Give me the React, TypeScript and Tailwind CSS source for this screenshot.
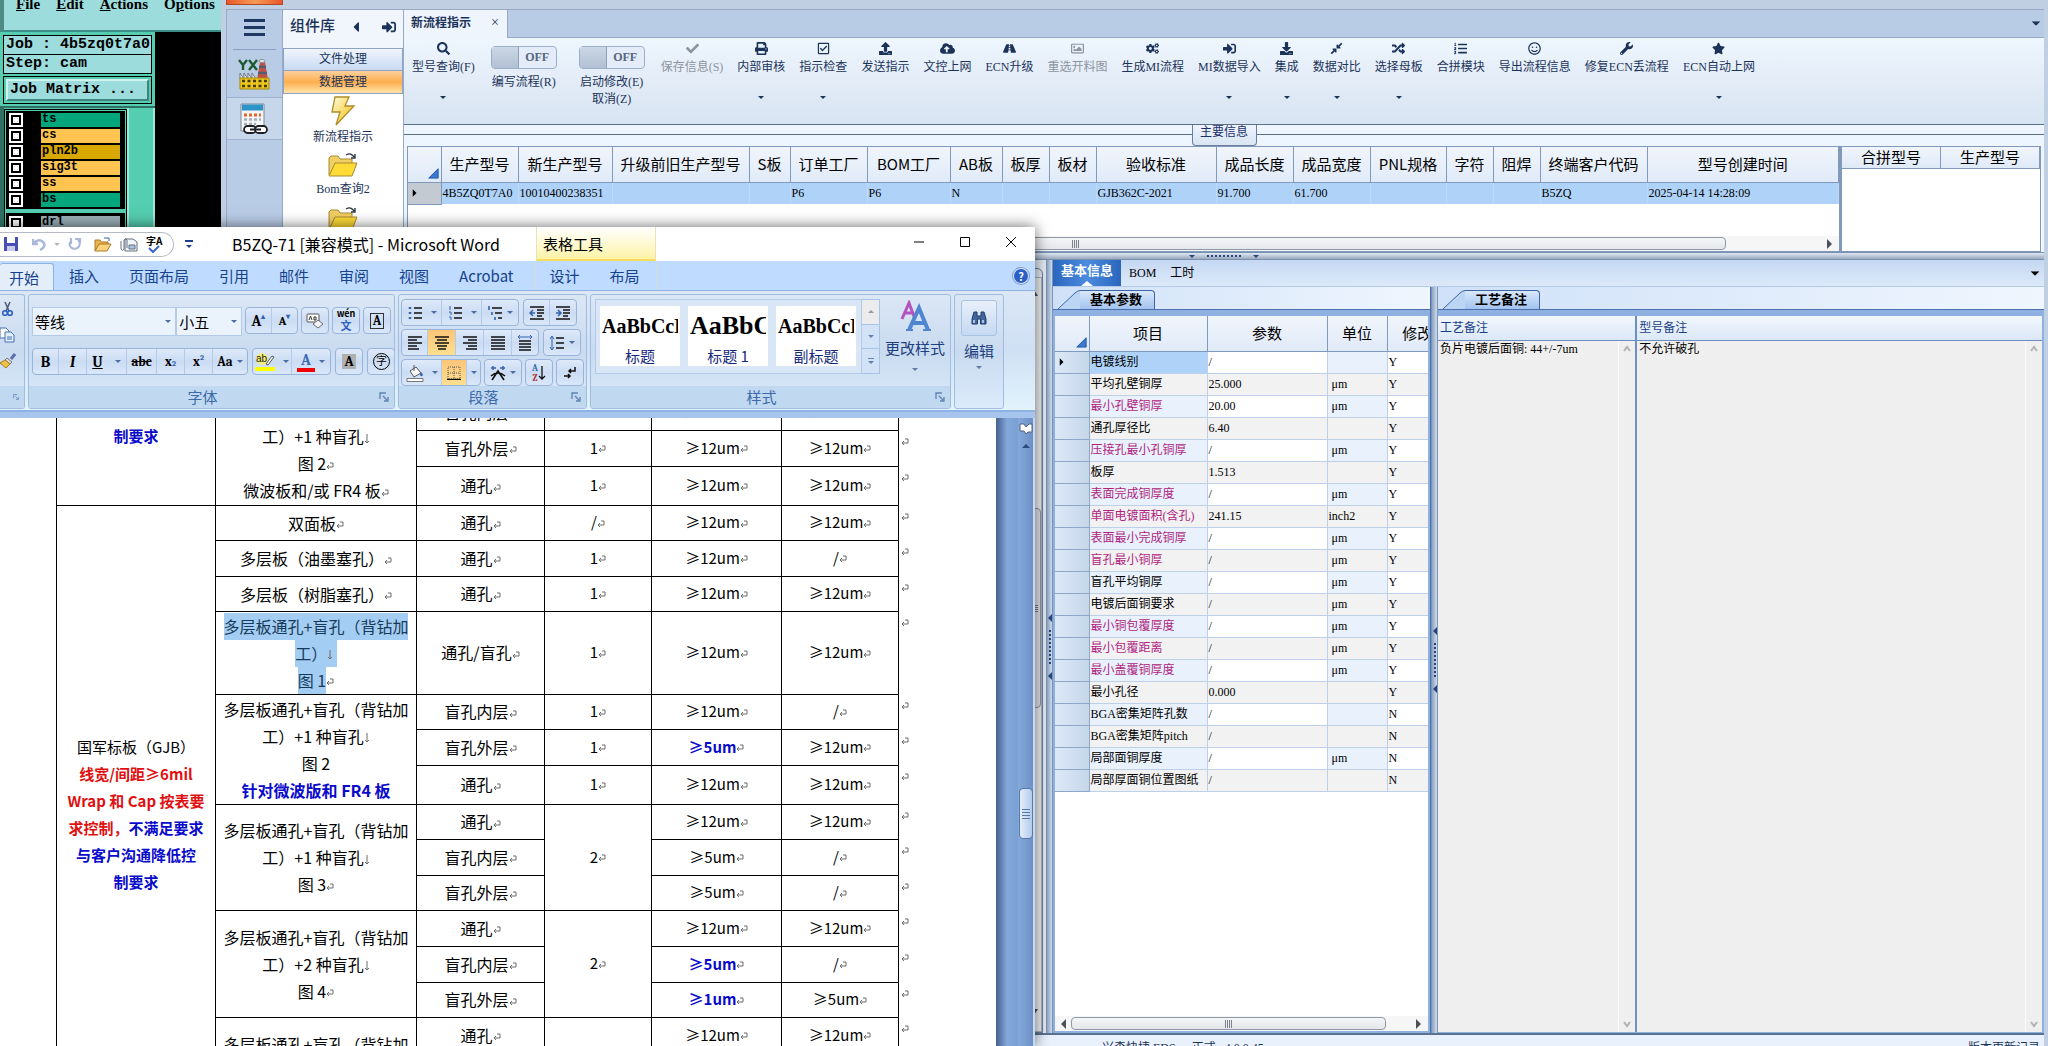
import React from 'react';
import {
  FaSearch, FaCheck, FaPrint, FaRegCheckSquare, FaUpload, FaCloudUploadAlt, FaRoad, FaRegImage, FaCogs,
  FaSignInAlt, FaDownload, FaCompressAlt, FaRandom, FaListOl, FaRegSmile, FaWrench, FaStar, FaCaretLeft,
} from 'react-icons/fa';

/* ---------- shared bits ---------- */

const Down = ({ className = '' }: { className?: string }) => (
  <svg viewBox="0 0 8 4" className={`w-[6px] h-[3px] shrink-0 ${className}`} aria-hidden="true">
    <path d="M0 0h8L4 4z" fill="currentColor" />
  </svg>
);

const HScroll = ({ thumb }: { thumb: string }) => (
  <div className="flex h-[15px] shrink-0 items-center bg-[#f6f6f7] text-[#4c5058]">
    <svg viewBox="0 0 16 12" className="w-4 h-3"><path d="M11 1v10L6 6z" fill="currentColor" /></svg>
    <div className={`flex h-[13px] items-center justify-center gap-px rounded-sm border border-[#8f98a5] bg-gradient-to-b from-[#f4f5f7] to-[#e4e7eb] ${thumb}`}>
      {[0, 1, 2, 3].map((i) => <span key={i} className="h-2 w-px bg-[#7c828c]" />)}
    </div>
    <span className="flex-1" />
    <svg viewBox="0 0 16 12" className="w-5 h-3"><path d="M6 1v10l5-5z" fill="currentColor" /></svg>
  </div>
);

/* ---------- CAM window ---------- */

const layers = [
  { name: 'ts', bg: 'bg-[#04a67c]' },
  { name: 'cs', bg: 'bg-[#fdc44f]' },
  { name: 'pln2b', bg: 'bg-[#d8a800]' },
  { name: 'sig3t', bg: 'bg-[#fdc44f]' },
  { name: 'ss', bg: 'bg-[#fdc44f]' },
  { name: 'bs', bg: 'bg-[#04a67c]' },
];

const LayerRow = ({ name, bg }: { name: string; bg: string }) => (
  <label className="flex h-4 items-center gap-[18px] pl-[3px] pr-[5px]">
    <input type="checkbox" className="m-0 h-[14px] w-[14px] shrink-0 appearance-none border-2 border-white bg-white shadow-[inset_0_0_0_2px_#000]" />
    <span className={`h-[14px] flex-1 pl-px text-xs font-bold leading-[13px] text-black ${bg}`}>{name}</span>
  </label>
);

const CamWindow = () => (
  <div className="absolute left-0 top-0 h-[240px] w-[221px] overflow-hidden bg-black font-['Liberation_Mono',monospace] text-black">
    <nav className="flex h-8 items-start gap-4 border-b-2 border-l-4 border-b-[#3c8f86] border-l-[#4e8b84] bg-[#9cdcdc] pl-3 font-['Liberation_Serif',serif] text-[15px] font-bold leading-[8px]">
      <a href="#file"><u>F</u>ile</a>
      <a href="#edit"><u>E</u>dit</a>
      <a href="#actions"><u>A</u>ctions</a>
      <a href="#options">O<u>p</u>tions</a>
    </nav>
    <div className="w-[155px] bg-[#55cdb0]">
      <div className="border-2 border-[#55cdb0] px-px pt-px">
        <div className="border border-black bg-[#9cdcdc] text-[15px] font-bold">
          <div className="h-[19px] whitespace-nowrap border-b border-black pl-[2px] leading-[18px]">Job : 4b5zq0t7a0</div>
          <div className="h-[18px] pl-[2px] leading-[18px]">Step: cam</div>
        </div>
        <div className="mt-[2px] border border-black p-[2px]">
          <button className="h-[22px] w-full border-2 border-b-[#3f857d] border-l-[#d0f3ee] border-r-[#3f857d] border-t-[#d0f3ee] bg-[#9cdcdc] pl-[2px] text-left text-[15px] font-bold leading-[18px]">Job Matrix ...</button>
        </div>
      </div>
      <div className="flex border-t-2 border-[#2f6f64]">
        <div className="w-[127px] border-l-4 border-[#2f6f64]">
          <div className="mt-px border border-black bg-[#55cdb0] p-px">
            <div className="bg-black pb-px pt-px">
              {layers.map((l) => <LayerRow key={l.name} {...l} />)}
            </div>
            <div className="mt-1 bg-black pt-[2px]"><LayerRow name="drl" bg="bg-[#9aaeb6]" /></div>
          </div>
        </div>
        <div className="flex-1 border-l-2 border-r-2 border-[#9cebd6]" />
      </div>
    </div>
  </div>
);

/* ---------- MI application: left side ---------- */

const FactoryIcon = () => (
  <svg viewBox="0 0 32 32" className="h-8 w-8" aria-hidden="true">
    <path d="M1 2l4 5v5M9 2L5 7M11 2l8 10M19 2l-8 10" stroke="#1d5a33" strokeWidth="2.4" fill="none" />
    <path d="M22 4h5l3 18h-11z" fill="#c2504a" />
    <path d="M21 9h7M20 15h9" stroke="#545d6c" strokeWidth="2.5" />
    <ellipse cx="24" cy="3" rx="3" ry="1.6" fill="#dfe4ea" stroke="#8c95a2" />
    <path d="M2 21v-6l4 6v-6l4 6v-6l4 6v-6l4 6" fill="#fff" stroke="#6c7582" />
    <path d="M2 20h29v11H2z" fill="#eec71c" stroke="#a5870b" />
    <path d="M4 23h25M4 28h25" stroke="#463c12" strokeWidth="2.4" strokeDasharray="3 2.5" />
  </svg>
);

const CalendarIcon = () => (
  <svg viewBox="0 0 30 32" className="h-8 w-[30px]" aria-hidden="true">
    <path d="M2 1h23v27H2z" fill="#f3f5f8" stroke="#7e8794" />
    <path d="M3 1.500h21v6H3z" fill="#2c94c8" />
    <path d="M5 12h17" stroke="#e0662c" strokeWidth="3" strokeDasharray="3 2" />
    <path d="M5 16.500h17M5 21h12" stroke="#a8aeb8" strokeWidth="2.500" strokeDasharray="3 2" />
    <rect x="5" y="23" width="12" height="7" rx="3.500" fill="#fff" stroke="#1b1f25" strokeWidth="1.800" />
    <rect x="16" y="23" width="12" height="7" rx="3.500" fill="#fff" stroke="#1b1f25" strokeWidth="1.800" />
    <path d="M11 26.500h11" stroke="#1b1f25" strokeWidth="2" />
  </svg>
);

const BoltIcon = () => (
  <svg viewBox="0 0 26 30" className="h-[30px] w-[26px]" aria-hidden="true">
    <defs><linearGradient id="bolt" x1="0" y1="0" x2="1" y2="1"><stop offset="0" stopColor="#fffbe0" /><stop offset="1" stopColor="#f3bd00" /></linearGradient></defs>
    <path d="M5 1h14l-4 9h9L6 29l4-13H2z" fill="url(#bolt)" stroke="#b08d25" strokeWidth="1.300" />
  </svg>
);

const FolderIcon = () => (
  <svg viewBox="0 0 32 26" className="h-[26px] w-8" aria-hidden="true">
    <path d="M2 23V6l2-2h7l2 3h12v4" fill="#f0cf63" stroke="#a88a35" />
    <path d="M2 24L8 11h22l-5 13z" fill="#ffdb35" stroke="#a88a35" />
    <path d="M19 3q5-3 8 2M28 2v4h-4" fill="none" stroke="#2c3742" strokeWidth="1.400" />
  </svg>
);

const SideRail = () => (
  <div className="flex w-[56px] shrink-0 flex-col border-l border-t border-[#97a9c4] bg-[#b9cce6]">
    <button className="mx-[6px] flex h-10 flex-col items-center justify-center gap-1 border-b border-[#8b9fbe] pb-1" aria-label="菜单">
      <span className="h-[3px] w-[21px] bg-[#1f3763]" />
      <span className="h-[3px] w-[21px] bg-[#1f3763]" />
      <span className="h-[3px] w-[21px] bg-[#1f3763]" />
    </button>
    <button className="flex h-[47px] items-center justify-center pr-[2px]" aria-label="工厂"><FactoryIcon /></button>
    <button className="flex h-[43px] items-center justify-center border-y border-[#9fb3d0] bg-[#c6d6eb] pr-[2px]" aria-label="日历"><CalendarIcon /></button>
  </div>
);

const ComponentLibrary = () => (
  <aside className="flex w-[122px] shrink-0 flex-col border-x border-t border-[#97a9c4] bg-white text-xs text-[#1c3359]">
    <div className="flex h-[38px] shrink-0 items-center bg-[#f1f6fc] px-[7px] pb-1">
      <h2 className="flex-1 text-[15px] font-medium">组件库</h2>
      <FaCaretLeft className="mr-[18px] h-4 w-4" />
      <FaSignInAlt className="h-[14px] w-[14px]" />
    </div>
    <button className="h-[23px] shrink-0 border border-[#8fa4c5] bg-gradient-to-b from-[#f0f5fd] to-[#c8daf2] leading-[21px]">文件处理</button>
    <button className="h-[23px] shrink-0 border-x border-b border-[#8fa4c5] bg-gradient-to-b from-[#fdd09a] via-[#fcae4b] to-[#ffe3a8] leading-[21px]">数据管理</button>
    <ul className="flex flex-col items-center overflow-hidden">
      <li className="flex h-[58px] flex-col items-center gap-[3px] pt-[2px]"><BoltIcon /><span className="leading-4">新流程指示</span></li>
      <li className="flex h-[54px] flex-col items-center gap-[3px]"><FolderIcon /><span className="leading-4">Bom查询2</span></li>
      <li><FolderIcon /></li>
    </ul>
  </aside>
);

/* ---------- MI application: toolbar ---------- */

type Tool = { icon: React.ReactNode; text: string; menu?: boolean; off?: boolean };

const I = 'h-[13px] w-[13px]';
const tools: Tool[] = [
  { icon: <FaCheck className={I} />, text: '保存信息(S)', off: true },
  { icon: <FaPrint className={I} />, text: '内部审核', menu: true },
  { icon: <FaRegCheckSquare className={I} />, text: '指示检查', menu: true },
  { icon: <FaUpload className={I} />, text: '发送指示' },
  { icon: <FaCloudUploadAlt className="h-[15px] w-[15px]" />, text: '文控上网' },
  { icon: <FaRoad className={I} />, text: 'ECN升级' },
  { icon: <FaRegImage className={I} />, text: '重选开料图', off: true },
  { icon: <FaCogs className={I} />, text: '生成MI流程' },
  { icon: <FaSignInAlt className={I} />, text: 'MI数据导入', menu: true },
  { icon: <FaDownload className={I} />, text: '集成', menu: true },
  { icon: <FaCompressAlt className={I} />, text: '数据对比', menu: true },
  { icon: <FaRandom className={I} />, text: '选择母板', menu: true },
  { icon: <FaListOl className={I} />, text: '合拼模块' },
  { icon: <FaRegSmile className={I} />, text: '导出流程信息' },
  { icon: <FaWrench className={I} />, text: '修复ECN丢流程' },
  { icon: <FaStar className={I} />, text: 'ECN自动上网', menu: true },
];

const ToolButton = ({ icon, text, menu, off }: Tool) => (
  <button disabled={off} className={`flex shrink-0 flex-col items-center ${off ? 'text-[#8d949e]' : 'text-[#1c3359]'}`}>
    <span className="flex h-5 items-center">{icon}</span>
    <span className="whitespace-nowrap leading-[18px]">{text}</span>
    {menu && <Down className="mt-5" />}
  </button>
);

const Toggle = ({ text, sub }: { text: string; sub?: string }) => (
  <div className="flex shrink-0 flex-col items-center pt-2">
    <button role="switch" aria-checked="false" aria-label={text} className="flex h-[23px] w-[66px] rounded-sm border border-[#9db0cb] bg-[#e3ecf8]">
      <span className="h-full w-[27px] border-r border-[#8fa1bb] bg-gradient-to-b from-[#ccd8e6] to-[#b2c0d2]" />
      <span className="flex-1 text-center font-bold leading-[20px] text-[#56657e]">OFF</span>
    </button>
    <span className="mt-1 whitespace-nowrap leading-[18px]">{text}</span>
    {sub && <span className="leading-[16px]">{sub}</span>}
  </div>
);

const Toolbar = () => (
  <div className="flex h-[86px] shrink-0 items-start gap-4 overflow-hidden bg-gradient-to-b from-[#eef6fe] via-[#e3ecf7] to-[#d7e4f2] pl-2 text-xs text-[#1c3359]">
    <ToolButton icon={<FaSearch className={I} />} text="型号查询(F)" menu />
    <div className="flex gap-[22px]">
      <Toggle text="编写流程(R)" />
      <Toggle text="启动修改(E)" sub="取消(Z)" />
    </div>
    <div className="flex items-start gap-[14px]">
      {tools.map((t) => <ToolButton key={t.text} {...t} />)}
    </div>
  </div>
);

/* ---------- MI application: main grid ---------- */

const mainCols: { name: string; w: string; value?: string }[] = [
  { name: '生产型号', w: 'w-[77px]', value: '4B5ZQ0T7A0' },
  { name: '新生产型号', w: 'w-[94px]', value: '10010400238351' },
  { name: '升级前旧生产型号', w: 'w-[137px]' },
  { name: 'S板', w: 'w-[41px]' },
  { name: '订单工厂', w: 'w-[77px]', value: 'P6' },
  { name: 'BOM工厂', w: 'w-[83px]', value: 'P6' },
  { name: 'AB板', w: 'w-[52px]', value: 'N' },
  { name: '板厚', w: 'w-[47px]' },
  { name: '板材', w: 'w-[47px]' },
  { name: '验收标准', w: 'w-[120px]', value: 'GJB362C-2021' },
  { name: '成品长度', w: 'w-[77px]', value: '91.700' },
  { name: '成品宽度', w: 'w-[77px]', value: '61.700' },
  { name: 'PNL规格', w: 'w-[76px]' },
  { name: '字符', w: 'w-[47px]' },
  { name: '阻焊', w: 'w-[47px]' },
  { name: '终端客户代码', w: 'w-[107px]', value: 'B5ZQ' },
  { name: '型号创建时间', w: '', value: '2025-04-14 14:28:09' },
];

const HEAD = "border-b border-r border-[#8099bd] bg-gradient-to-b from-[#f1f5fb] to-[#dfeaf8] p-0 text-[15px] font-normal text-black font-['Noto_Sans_CJK_SC',sans-serif]";

const Corner = () => (
  <svg viewBox="0 0 34 34" className="ml-auto h-8 w-8" aria-hidden="true"><path d="M31 22v10H21z" fill="#3a78cf" stroke="#2457a6" /></svg>
);

const RowArrow = () => (
  <svg viewBox="0 0 8 10" className="ml-1 h-2 w-[6px]" aria-hidden="true"><path d="M1 0v10l5-5z" fill="#000" /></svg>
);

const MainGrid = () => (
  <section className="flex flex-col border-t border-[#5d6e86] bg-[#edf5fe]">
    <div className="flex h-[21px] shrink-0 items-center">
      <span className="-mt-[3px] h-px flex-1 bg-[#5d6e86]" />
      <h3 className="h-[21px] w-[65px] rounded-b-sm border border-t-0 border-[#6b7f9c] bg-gradient-to-b from-[#eef4fc] to-[#d9e5f4] text-center text-xs leading-[15px] text-[#1b2f6b]">主要信息</h3>
      <span className="-mt-[3px] h-px flex-1 bg-[#5d6e86]" />
    </div>
    <div className="flex h-[106px] pl-[3px] pr-[3px]">
      <div className="flex min-w-0 flex-1 flex-col border border-[#8099bd] bg-white">
        <table className="w-full table-fixed border-collapse">
          <thead>
            <tr className="h-[35px]">
              <th scope="col" className={`${HEAD} w-[33px]`}><Corner /></th>
              {mainCols.map((c) => <th key={c.name} scope="col" className={`${HEAD} ${c.w} whitespace-nowrap leading-8`}>{c.name}</th>)}
            </tr>
          </thead>
          <tbody>
            <tr className="h-[22px] bg-[#afd3f8] text-xs">
              <td className="border-b border-r border-[#8099bd] bg-[#c4cad2] p-0"><RowArrow /></td>
              {mainCols.map((c) => <td key={c.name} className="border-r border-[#bcdaf9] p-0 pl-px leading-4">{c.value}</td>)}
            </tr>
          </tbody>
        </table>
        <div className="flex-1" />
        <HScroll thumb="w-[91%]" />
      </div>
      <div className="w-[201px] shrink-0 border border-l-2 border-[#8099bd] bg-white">
        <table className="w-full table-fixed border-collapse">
          <thead><tr className="h-[21px]">
            <th scope="col" className={`${HEAD} leading-5`}>合拼型号</th>
            <th scope="col" className={`${HEAD} leading-5`}>生产型号</th>
          </tr></thead>
        </table>
      </div>
    </div>
  </section>
);

/* ---------- MI application: lower panes ---------- */

type Param = [name: string, value: string, unit: string, flag: string, key?: boolean];
const params: Param[] = [
  ['电镀线别', '/', '', 'Y'],
  ['平均孔壁铜厚', '25.000', 'μm', 'Y'],
  ['最小孔壁铜厚', '20.00', 'μm', 'Y', true],
  ['通孔厚径比', '6.40', '', 'Y'],
  ['压接孔最小孔铜厚', '/', 'μm', 'Y', true],
  ['板厚', '1.513', '', 'Y'],
  ['表面完成铜厚度', '/', 'μm', 'Y', true],
  ['单面电镀面积(含孔)', '241.15', 'inch2', 'Y', true],
  ['表面最小完成铜厚', '/', 'μm', 'Y', true],
  ['盲孔最小铜厚', '/', 'μm', 'Y', true],
  ['盲孔平均铜厚', '/', 'μm', 'Y'],
  ['电镀后面铜要求', '/', 'μm', 'Y'],
  ['最小铜包覆厚度', '/', 'μm', 'Y', true],
  ['最小包覆距离', '/', 'μm', 'Y', true],
  ['最小盖覆铜厚度', '/', 'μm', 'Y', true],
  ['最小孔径', '0.000', '', 'Y'],
  ['BGA密集矩阵孔数', '/', '', 'N'],
  ['BGA密集矩阵pitch', '/', '', 'N'],
  ['局部面铜厚度', '/', 'μm', 'N'],
  ['局部厚面铜位置图纸', '/', '', 'N'],
];

const PaneTab = ({ text }: { text: string }) => (
  <div className="flex h-[23px] shrink-0 items-end border-b border-[#4a71ad] bg-gradient-to-r from-[#cfe1f8] to-[#f0f6fe] pl-[5px]">
    <svg viewBox="0 0 22 19" className="h-[19px] w-[22px]" aria-hidden="true">
      <path d="M0 19L17 3q3-3 5-2.500V19z" fill="#bcd5f5" /><path d="M0 19L17 3q3-2.500 5-2.500" fill="none" stroke="#3e66a5" />
    </svg>
    <h3 className="h-[19px] rounded-tr border-r border-t border-[#3e66a5] bg-gradient-to-b from-[#d9e8fb] to-[#a3c3ee] pl-[10px] pr-3 text-[13px] font-bold leading-[18px] text-black">{text}</h3>
  </div>
);

const VSplit = () => (
  <div className="flex w-[7px] shrink-0 flex-col items-center justify-center gap-2 border-x border-[#7a93b8] bg-gradient-to-r from-[#8fa3bd] to-[#cfdcec] text-[#27457c]">
    <svg viewBox="0 0 4 8" className="h-2 w-1"><path d="M4 0v8L0 4z" fill="currentColor" /></svg>
    <span className="h-[34px] border-l-2 border-dotted border-current" />
    <svg viewBox="0 0 4 8" className="h-2 w-1"><path d="M4 0v8L0 4z" fill="currentColor" /></svg>
  </div>
);

const ParamPane = () => (
  <section className="flex w-[378px] shrink-0 flex-col border-r border-[#4a71ad]">
    <PaneTab text="基本参数" />
    <div className="flex min-h-0 flex-1 flex-col border-2 border-t-[6px] border-[#8fb1e2] bg-white">
      <div className="min-h-0 flex-1 overflow-hidden">
        <table className="w-[393px] table-fixed border-collapse text-xs">
          <thead>
            <tr className="h-[35px]">
              <th scope="col" className={`${HEAD} w-[34px]`}><Corner /></th>
              <th scope="col" className={`${HEAD} w-[118px]`}>项目</th>
              <th scope="col" className={`${HEAD} w-[120px]`}>参数</th>
              <th scope="col" className={`${HEAD} w-[60px]`}>单位</th>
              <th scope="col" className={HEAD}>修改</th>
            </tr>
          </thead>
          <tbody>
            {params.map(([name, value, unit, flag, key], i) => {
              const tint = i % 2 ? 'bg-[#f2f2f2]' : 'bg-[#e8f1fc]';
              const plain = i % 2 ? 'bg-[#f2f2f2]' : 'bg-white';
              return (
                <tr key={name} className="h-[22px]">
                  <td className="border-b border-r border-[#8fa5c6] bg-gradient-to-r from-[#dce9f7] to-[#c5d6ea] p-0">{i === 0 && <RowArrow />}</td>
                  <td className={`whitespace-nowrap border-b border-r border-[#bdd0ea] p-0 pl-px leading-4 ${key ? 'text-[#b01f82]' : 'text-black'} ${i === 0 ? 'bg-[#afd3f8]' : tint}`}>{name}</td>
                  <td className={`border-b border-r border-[#bdd0ea] p-0 pl-px leading-4 ${plain}`}>{value}</td>
                  <td className={`border-b border-r border-[#bdd0ea] p-0 leading-4 ${unit === 'inch2' ? 'pl-px' : 'pl-1'} ${tint}`}>{unit}</td>
                  <td className={`border-b border-[#bdd0ea] p-0 pl-px leading-4 ${plain}`}>{flag}</td>
                </tr>
              );
            })}
          </tbody>
        </table>
      </div>
      <HScroll thumb="w-[315px]" />
    </div>
  </section>
);

const Chevron = ({ up }: { up?: boolean }) => (
  <svg viewBox="0 0 8 8" className="h-2 w-2"><path d={up ? 'M1 6l3-4 3 4' : 'M1 2l3 4 3-4'} fill="none" stroke="#b3b3b3" strokeWidth="2" /></svg>
);

const Remark = ({ id, title, text, className }: { id: string; title: string; text: string; className: string }) => (
  <div className={`flex flex-col ${className}`}>
    <label htmlFor={id} className="block h-[25px] shrink-0 border-b border-[#6d8fc0] bg-gradient-to-b from-[#f2f7fd] to-[#dbe8f7] pl-[2px] leading-6 text-[#1b3f86]">{title}</label>
    <div className="flex min-h-0 flex-1 bg-[#efefef]">
      <textarea id={id} defaultValue={text} className="min-w-0 flex-1 resize-none bg-[#efefef] pl-[2px] leading-4 text-black outline-none" />
      <div className="flex w-[17px] flex-col items-center justify-between border-l border-[#fafafa] py-1"><Chevron up /><Chevron /></div>
    </div>
  </div>
);

const MiApp = () => (
  <div className="absolute inset-0 flex flex-col bg-[#c0cfe2] pl-[226px] pr-1">
    <div className="h-[9px] shrink-0 bg-[#c0cfe2]"><div className="h-[5px] w-[57px] border-x border-b border-[#b34a26] bg-gradient-to-r from-[#e8552a] via-[#f59a55] to-[#e8552a]" /></div>
    <div className="flex min-h-0 flex-1">
      <SideRail />
      <ComponentLibrary />
      <main className="flex min-w-0 flex-1 flex-col">
        <div className="flex h-[29px] shrink-0 items-stretch border-b border-t border-[#97a9c4] bg-[#b9cce6] text-[#1c3359]">
          <div className="-mb-px flex w-[104px] items-center justify-between border-r border-[#97a9c4] bg-[#eef5fd] pb-[2px] pl-[7px] pr-2">
            <span className="text-xs font-bold">新流程指示</span>
            <button aria-label="关闭" className="text-sm leading-none">×</button>
          </div>
          <span className="flex-1" />
          <span className="flex items-center pr-[5px]"><Down className="scale-150" /></span>
        </div>
        <Toolbar />
        <MainGrid />
        <div className="flex h-2 shrink-0 items-center justify-center gap-3 border-y border-[#7a8fae] bg-gradient-to-b from-[#dfe9f5] to-[#9aa9bd] text-[#27457c]">
          <Down /><span className="w-[34px] border-t-2 border-dotted border-current" /><Down />
        </div>
        <div className="flex min-h-0 flex-1">
          {/* order pane, mostly below the document window */}
          <div className="flex w-[642px] shrink-0 flex-col bg-[#e3ebf5] pr-[3px] pt-2">
            <div className="flex min-h-0 flex-1 justify-end rounded-tr-md border border-[#6c7f9b] bg-[#e3ebf5] pt-2">
              <div className="flex w-4 flex-col items-center border border-[#a9b5c6] bg-[#f1f2f4]">
                <svg viewBox="0 0 8 6" className="my-3 h-[6px] w-2 shrink-0"><path d="M0 6h8L4 0z" fill="#4c5058" /></svg>
                <span className="h-[200px] shrink-0" />
                <span className="flex h-[200px] w-full shrink-0 flex-col items-center justify-center gap-px rounded-sm border border-[#8f98a5] bg-[#e4e6ea]">
                  {[0, 1, 2, 3].map((i) => <i key={i} className="h-px w-2 bg-[#7c828c]" />)}
                </span>
                <span className="flex-1" />
                <svg viewBox="0 0 8 6" className="my-4 h-[6px] w-2 shrink-0"><path d="M0 0h8L4 6z" fill="#4c5058" /></svg>
              </div>
            </div>
          </div>
          <VSplit />
          <div className="flex min-w-0 flex-1 flex-col">
            <div className="flex h-[27px] shrink-0 items-center border-b border-[#b5c9e6] bg-gradient-to-b from-[#c5d8f2] to-[#dce9fa] text-xs text-black">
              <button className="flex h-full w-[68px] flex-col items-center justify-between bg-gradient-to-r from-[#2a66bd] via-[#4c8be0] to-[#2a66bd] pt-px text-[13px] font-bold leading-[19px] text-white">
                基本信息
                <svg viewBox="0 0 12 5" className="h-[5px] w-3 shrink-0"><path d="M0 5l6-5 6 5z" fill="#fff" /></svg>
              </button>
              <button className="px-2">BOM</button>
              <button className="px-[6px]">工时</button>
              <span className="flex-1" />
              <Down className="mr-[6px] scale-150" />
            </div>
            <div className="flex min-h-0 flex-1">
              <ParamPane />
              <VSplit />
              <section className="flex min-w-0 flex-1 flex-col">
                <PaneTab text="工艺备注" />
                <div className="flex min-h-0 flex-1 border-b border-r-2 border-t-[6px] border-[#8fb1e2] text-xs">
                  <Remark id="craft" title="工艺备注" text="负片电镀后面铜: 44+/-7um" className="w-[33%] border-r-2 border-[#6d8fc0]" />
                  <Remark id="model" title="型号备注" text="不允许破孔" className="min-w-0 flex-1" />
                </div>
              </section>
            </div>
          </div>
        </div>
      </main>
    </div>
    <footer className="flex h-[13px] shrink-0 items-start justify-between overflow-hidden border-t-2 border-[#5a7191] bg-[#e9f2fc] pl-[876px] pr-1 pt-[5px] text-xs leading-4 text-[#1c3359]">
      <span className="whitespace-pre">兴森快捷 EDS  -  正式   4.0.0.45</span>
      <a href="#log">版本更新记录</a>
    </footer>
  </div>
);

/* ---------- Word window: ribbon ---------- */

const BTN = 'flex h-[25px] items-center justify-center px-[5px] text-black';
const Group = ({ children }: { children: React.ReactNode }) => (
  <div className="flex shrink-0 divide-x divide-[#b3cae8] rounded-sm border border-[#98b4da] bg-gradient-to-b from-[#dfeafa] via-[#cbdcf3] to-[#d9e7f9]">{children}</div>
);
const RB = ({ label, children, className = '' }: { label: string; children: React.ReactNode; className?: string }) => (
  <button aria-label={label} className={`${BTN} ${className}`}>{children}</button>
);

const lines: Record<string, string> = {
  left: 'M1 2h14M1 5h9M1 8h14M1 11h9M1 14h11',
  center: 'M1 2h14M3 5h10M1 8h14M3 11h10M4 14h8',
  right: 'M1 2h14M6 5h9M1 8h14M6 11h9M4 14h11',
  just: 'M1 2h14M1 5h14M1 8h14M1 11h14M1 14h14',
  bullet: 'M7 3h8M7 8h8M7 13h8',
  outdent: 'M1 2h14M8 5h7M8 8h7M8 11h5M1 14h14',
};
const Lines = ({ kind, children }: { kind: string; children?: React.ReactNode }) => (
  <svg viewBox="0 0 16 16" className="h-4 w-4 shrink-0" aria-hidden="true"><path d={lines[kind]} stroke="#111" strokeWidth="1.500" />{children}</svg>
);

const Launcher = () => (
  <svg viewBox="0 0 10 10" className="h-[10px] w-[10px]" aria-hidden="true"><path d="M1 7V1h6M4 4l4 4M9 5v4H5" fill="none" stroke="#5f82b3" strokeWidth="1.300" /></svg>
);

const Panel = ({ title, children, className }: { title?: string; children: React.ReactNode; className: string }) => (
  <div className={`flex h-[115px] shrink-0 flex-col overflow-hidden rounded-[3px] border border-[#a0bde0] bg-gradient-to-b from-[#dce7f5] via-[#c9dbf0] to-[#dcebfb] ${className}`}>
    <div className="min-h-0 flex-1">{children}</div>
    {title !== undefined && (
      <div className="flex h-[22px] shrink-0 items-center bg-[#c0d8f0] px-[5px] text-[15px] leading-[22px] text-[#3c6aaa]">
        <span className="flex-1 pr-2 text-center">{title}</span><Launcher />
      </div>
    )}
  </div>
);

const FontPanel = () => (
  <Panel title="字体" className="w-[367px]">
    <div className="flex items-start gap-[3px] px-[3px] pt-3">
      <label className="flex h-[29px] w-[145px] items-center border border-[#b3cae8] bg-[#eaf2fb] pr-1">
        <select aria-label="字体" className="w-full appearance-none bg-transparent pl-[2px] text-[15px] leading-6"><option>等线</option></select>
        <Down className="text-[#4c6ea5]" />
      </label>
      <label className="-ml-[3px] flex h-[29px] w-[66px] items-center border border-[#b3cae8] bg-[#eaf2fb] pr-1">
        <select aria-label="字号" className="w-full appearance-none bg-transparent pl-[2px] text-[15px] leading-6"><option>小五</option></select>
        <Down className="text-[#4c6ea5]" />
      </label>
      <Group>
        <RB label="增大字体" className="w-[26px] font-serif text-[15px] font-bold">A<sup className="text-[8px] text-[#3563ad]">▴</sup></RB>
        <RB label="缩小字体" className="w-[25px] font-serif text-xs font-bold">A<sup className="text-[8px] text-[#3563ad]">▾</sup></RB>
      </Group>
      <Group>
        <RB label="清除格式" className="w-[26px]">
          <svg viewBox="0 0 18 16" className="h-4 w-[18px] shrink-0"><rect x="1" y="1" width="12" height="8" rx="1" fill="#fff" stroke="#555" /><path d="M3 7l1.500-4L6 7M8 7V4h2v3z" stroke="#333" fill="none" /><path d="M7 11l5-4 5 4-5 4z" fill="#f4f4f8" stroke="#666" /></svg>
        </RB>
      </Group>
      <Group><RB label="拼音指南" className="w-[26px] flex-col text-[9px] font-bold leading-[10px]"><span>wén</span><span className="text-[11px] leading-[13px] text-[#2f5fc0]">文</span></RB></Group>
      <Group><RB label="字符边框" className="w-[26px]"><span className="border border-[#333] px-[2px] font-serif text-[13px] font-bold leading-[14px]">A</span></RB></Group>
    </div>
    <div className="flex items-start gap-1 px-[3px] pt-3 font-serif">
      <Group>
        <RB label="加粗" className="w-[26px] text-[15px] font-bold">B</RB>
        <RB label="倾斜" className="w-7 text-[15px] font-bold italic">I</RB>
        <RB label="下划线" className="w-10 gap-3 text-[15px] font-bold"><u>U</u><Down className="text-[#4c6ea5]" /></RB>
        <RB label="删除线" className="w-[30px] text-[13px] font-bold"><s>abc</s></RB>
        <RB label="下标" className="w-7 text-[13px] font-bold">x<sub className="text-[8px] text-[#3563ad]">2</sub></RB>
        <RB label="上标" className="w-7 text-[13px] font-bold">x<sup className="text-[8px] text-[#3563ad]">2</sup></RB>
        <RB label="更改大小写" className="w-[34px] gap-1 text-[13px] font-bold">Aa<Down className="text-[#4c6ea5]" /></RB>
      </Group>
      <Group>
        <RB label="突出显示" className="w-[39px] gap-2">
          <svg viewBox="0 0 20 20" className="h-5 w-5 shrink-0"><circle cx="7" cy="7" r="6" fill="#f5ee7a" /><text x="1" y="10" fontSize="10" fill="#222" fontFamily="Liberation Sans">ab</text><path d="M11 12l6-8 2 1-6 8z" fill="#fff" stroke="#555" /><path d="M0 15h20v4H0z" fill="#ff0" /></svg>
          <Down className="text-[#4c6ea5]" />
        </RB>
        <RB label="字体颜色" className="w-[38px] gap-1">
          <span className="w-5 border-b-4 border-[#f00000] text-[15px] font-bold leading-4 text-[#3a68b4]">A</span>
          <Down className="text-[#4c6ea5]" />
        </RB>
      </Group>
      <Group><RB label="字符底纹" className="w-[26px]"><span className="bg-[#b0b0b0] px-[2px] text-[14px] font-bold leading-[15px]">A</span></RB></Group>
      <Group><RB label="带圈字符" className="w-[26px]"><span className="flex h-[17px] w-[17px] shrink-0 items-center justify-center rounded-full border border-black text-[11px] leading-none">字</span></RB></Group>
    </div>
  </Panel>
);

const ParagraphPanel = () => (
  <Panel title="段落" className="w-[189px]">
    <div className="flex flex-col gap-[3px] px-[2px] pt-1">
      <div className="flex gap-1">
        <Group>
          <RB label="项目符号" className="w-10 gap-2"><Lines kind="bullet"><path d="M3 2v2M3 7v2M3 12v2" stroke="#3563ad" strokeWidth="2.500" /></Lines><Down className="text-[#4c6ea5]" /></RB>
          <RB label="编号" className="w-10 gap-2"><Lines kind="bullet"><path d="M3 1v4M2 7h2v3M2 12h2v3" stroke="#3563ad" fill="none" /></Lines><Down className="text-[#4c6ea5]" /></RB>
          <RB label="多级列表" className="w-9 gap-1">
            <svg viewBox="0 0 16 16" className="h-4 w-4 shrink-0"><path d="M5 3h10M8 8h7M11 13h4" stroke="#111" strokeWidth="1.500" /><path d="M2 1v4M5 7v3M8 12v3" stroke="#3563ad" strokeWidth="1.600" /></svg>
            <Down className="text-[#4c6ea5]" />
          </RB>
        </Group>
        <Group>
          <RB label="减少缩进" className="w-[26px]"><Lines kind="outdent"><path d="M6 8H1M4 5L1 8l3 3" stroke="#3563ad" fill="none" strokeWidth="1.500" /></Lines></RB>
          <RB label="增加缩进" className="w-[26px]"><Lines kind="outdent"><path d="M1 8h5M3 5l3 3-3 3" stroke="#3563ad" fill="none" strokeWidth="1.500" /></Lines></RB>
        </Group>
      </div>
      <div className="flex gap-1">
        <Group>
          <RB label="左对齐" className="w-[26px]"><Lines kind="left" /></RB>
          <RB label="居中" className="w-7 bg-gradient-to-b from-[#fcc579] to-[#fddf8f]"><Lines kind="center" /></RB>
          <RB label="右对齐" className="w-7"><Lines kind="right" /></RB>
          <RB label="两端对齐" className="w-7"><Lines kind="just" /></RB>
          <RB label="分散对齐" className="w-[26px]"><svg viewBox="0 0 16 16" className="h-4 w-4 shrink-0"><path d="M2 6h12M2 9h12M2 12h12M2 15h12" stroke="#111" strokeWidth="1.500" /><path d="M1 2h14M3 0L1 2l2 2M13 0l2 2-2 2" stroke="#3563ad" fill="none" /></svg></RB>
        </Group>
        <Group>
          <RB label="行距" className="w-9 gap-1"><Lines kind="bullet"><path d="M3 2v12M1 4l2-3 2 3M1 12l2 3 2-3" stroke="#3563ad" fill="none" /></Lines><Down className="text-[#4c6ea5]" /></RB>
        </Group>
      </div>
      <div className="flex gap-[3px]">
        <Group>
          <RB label="底纹" className="w-10 gap-2">
            <svg viewBox="0 0 18 18" className="h-[18px] w-[18px] shrink-0"><path d="M4 7l6-4 5 6-7 4z" fill="#f8f8f8" stroke="#555" /><path d="M8 1v6" stroke="#555" /><path d="M15 8q3 3 1 4t-2-2z" fill="#3563ad" /><path d="M1 14.500h16v3H1z" fill="#fff" stroke="#777" /></svg>
            <Down className="text-[#4c6ea5]" />
          </RB>
          <RB label="边框" className="w-[25px] bg-gradient-to-b from-[#fcc579] to-[#fddf8f]"><svg viewBox="0 0 14 14" className="h-[14px] w-[14px] shrink-0"><path d="M1 1h12v12H1zM7 1v12M1 7h12" stroke="#555" fill="none" strokeDasharray="1 1" /><path d="M0 13.500h14" stroke="#111" strokeWidth="1.500" /></svg></RB>
          <RB label="边框菜单" className="w-[13px]"><Down className="text-[#4c6ea5]" /></RB>
        </Group>
        <Group>
          <RB label="中文版式" className="w-9 gap-1">
            <svg viewBox="0 0 16 16" className="h-4 w-4 shrink-0"><path d="M2 15L8 6l6 9M1 11q7-6 14 0" fill="none" stroke="#111" strokeWidth="1.600" /><path d="M1 3h5M10 3h5M3 1v4M13 1v4" stroke="#3563ad" strokeWidth="1.500" /></svg>
            <Down className="text-[#4c6ea5]" />
          </RB>
        </Group>
        <Group><RB label="排序" className="w-[26px]"><span className="flex flex-col font-serif text-[9px] font-bold leading-[10px]"><b className="text-[#3563ad]">A</b><b className="text-[#b23030]">Z</b></span><svg viewBox="0 0 8 16" className="h-4 w-2 shrink-0"><path d="M4 1v13M1 11l3 3 3-3" stroke="#111" fill="none" strokeWidth="1.300" /></svg></RB></Group>
        <Group><RB label="显示标记" className="w-[26px]"><svg viewBox="0 0 14 14" className="h-[14px] w-[14px] shrink-0"><path d="M12 1v4H6M8 3L6 5l2 2M1 10h6M5 8l2 2-2 2" stroke="#111" fill="none" strokeWidth="1.500" /></svg></RB></Group>
      </div>
    </div>
  </Panel>
);

const styleCards = [
  { sample: 'AaBbCcD', name: '标题', size: 'text-xl' },
  { sample: 'AaBbC', name: '标题 1', size: 'text-[26px]' },
  { sample: 'AaBbCcD', name: '副标题', size: 'text-xl' },
];

const StylesPanel = () => (
  <Panel title="样式" className="w-[361px]">
    <div className="flex items-start pl-1 pt-1">
      <div className="flex h-[75px] w-[267px] shrink-0 items-start gap-2 border border-[#b3cae8] bg-[#d8e6f6] px-1 pt-[6px]">
        {styleCards.map((s) => (
          <button key={s.name} className="flex h-[60px] w-20 flex-col bg-white px-[2px]">
            <span className={`flex h-10 w-full items-center overflow-hidden font-['Liberation_Serif',serif] font-bold text-black ${s.size}`}>{s.sample}</span>
            <span className="w-full text-center text-[15px] leading-5 text-[#15297c]">{s.name}</span>
          </button>
        ))}
      </div>
      <div className="flex h-[75px] w-[18px] shrink-0 flex-col divide-y divide-[#a9c3e4] border border-l-0 border-[#a9c3e4] text-[#6482ad]">
        <button aria-label="上一行" className="flex flex-1 items-center justify-center bg-[#ececec]"><Down className="rotate-180 text-[#9a9a9a]" /></button>
        <button aria-label="下一行" className="flex flex-1 items-center justify-center bg-[#d3e3f7]"><Down /></button>
        <button aria-label="其他" className="flex flex-1 flex-col items-center justify-center gap-[2px] bg-[#d3e3f7]"><span className="h-px w-[6px] bg-current" /><Down /></button>
      </div>
      <button className="flex flex-1 flex-col items-center text-[15px] text-[#1d3f7d]">
        <svg viewBox="0 0 32 32" className="mb-1 mt-px h-8 w-8" aria-hidden="true">
          <path d="M3 19L10 3l6 16M6 13h8" fill="none" stroke="#b354bd" strokeWidth="3" />
          <path d="M10 30L20 8l9 22M14 23h12" fill="none" stroke="#4f86cf" strokeWidth="4" />
          <path d="M7 30h7M24 30h8" stroke="#4f86cf" strokeWidth="2" />
        </svg>
        <span className="leading-6">更改样式</span>
        <Down className="mt-2 text-[#5f7da8]" />
      </button>
    </div>
  </Panel>
);

const EditPanel = () => (
  <Panel className="w-[50px]">
    <button className="flex w-full flex-col items-center pt-[5px] text-[15px] text-[#1d3f7d]">
      <span className="flex h-9 w-9 items-center justify-center rounded-[3px] border border-[#a9c3e4] bg-gradient-to-b from-[#e8f0fa] to-[#c5d9f2]">
        <svg viewBox="0 0 16 14" className="h-[14px] w-4" aria-hidden="true"><path d="M3 1h3v4h4V1h3l2 7v5H9.500V8h-3v5H1V8z" fill="#44659b" stroke="#1f3c6e" /><path d="M3 9v3M12 9v3" stroke="#cfe0f6" strokeWidth="1.500" /></svg>
      </span>
      <span className="leading-[30px]">编辑</span>
      <Down className="text-[#5f7da8]" />
    </button>
  </Panel>
);

const ClipPanel = () => (
  <Panel title="" className="w-[25px] rounded-l-none border-l-0">
    <div className="flex flex-col gap-[10px] pt-[6px]">
      <button aria-label="剪切"><svg viewBox="0 0 16 16" className="h-4 w-4"><path d="M5 1l4 9M10 1L6 10" stroke="#4a5a72" strokeWidth="1.500" /><circle cx="5" cy="12" r="2.300" fill="none" stroke="#2f5fc0" strokeWidth="1.600" /><circle cx="10" cy="12" r="2.300" fill="none" stroke="#2f5fc0" strokeWidth="1.600" /></svg></button>
      <button aria-label="复制"><svg viewBox="0 0 16 16" className="h-4 w-4"><path d="M0 1h6l3 3v7H0z" fill="#fff" stroke="#4470b5" /><path d="M5 5h6l3 3v7H5z" fill="#e5effc" stroke="#4470b5" /><path d="M7 10h5M7 12h5" stroke="#4470b5" /></svg></button>
      <button aria-label="格式刷"><svg viewBox="0 0 16 16" className="h-4 w-4"><path d="M15 1l-4 5" stroke="#5b6fae" strokeWidth="3" /><path d="M7 5l5 4-2 2-5-4z" fill="#ddd" stroke="#777" /><path d="M5 7l5 4-4 4-6-5z" fill="#f1c24a" stroke="#a77d1c" /></svg></button>
    </div>
  </Panel>
);

/* ---------- Word window: document ---------- */

const Mark = () => (
  <svg viewBox="0 0 8 8" className="inline-block h-2 w-2 shrink-0" aria-hidden="true"><path d="M4 1h3v4H1M3 3L1 5l2 2" fill="none" stroke="#6d6d6d" /></svg>
);
const LineMark = () => (
  <svg viewBox="0 0 6 10" className="inline-block h-[10px] w-[6px] shrink-0" aria-hidden="true"><path d="M3 0v9M1 7l2 2 2-2" fill="none" stroke="#6d6d6d" /></svg>
);

type Row = { h: string; kind: string; n?: string; span?: number; a: string; b: string; key?: boolean; group?: React.ReactNode; gspan?: number };

const Ln = ({ children, end, className = '' }: { children: React.ReactNode; end?: 'p' | 'l'; className?: string }) => (
  <div className={`h-[27px] whitespace-nowrap leading-[26px] ${className}`}>{children}{end === 'p' && <Mark />}{end === 'l' && <LineMark />}</div>
);

const BLIND = '多层板通孔+盲孔（背钻加';

const rows: Row[] = [
  { h: 'h-9', kind: '盲孔内层', n: '1', a: '≥12um', b: '≥12um', gspan: 3, group: <><Ln>{BLIND}</Ln><Ln end="l">工）+1 种盲孔</Ln><Ln end="p">图 2</Ln><Ln end="p">微波板和/或 FR4 板</Ln></> },
  { h: 'h-9', kind: '盲孔外层', n: '1', a: '≥12um', b: '≥12um' },
  { h: 'h-[39px]', kind: '通孔', n: '1', a: '≥12um', b: '≥12um' },
  { h: 'h-[35px]', kind: '通孔', n: '/', a: '≥12um', b: '≥12um', group: <Ln end="p">双面板</Ln> },
  { h: 'h-9', kind: '通孔', n: '1', a: '≥12um', b: '/', group: <Ln end="p">多层板（油墨塞孔）</Ln> },
  { h: 'h-[35px]', kind: '通孔', n: '1', a: '≥12um', b: '≥12um', group: <Ln end="p">多层板（树脂塞孔）</Ln> },
  {
    h: 'h-[83px]', kind: '通孔/盲孔', n: '1', a: '≥12um', b: '≥12um', group: (
      <div className="text-[#173a5a]">
        <Ln><span className="inline-block h-[27px] bg-[#a3cdf2]">{BLIND}</span></Ln>
        <Ln><span className="inline-block h-[27px] bg-[#a3cdf2]">工）<LineMark />&nbsp;</span></Ln>
        <Ln end="p"><span className="inline-block h-[27px] bg-[#a3cdf2]">图 1</span></Ln>
      </div>
    ),
  },
  { h: 'h-[35px]', kind: '盲孔内层', n: '1', a: '≥12um', b: '/', gspan: 3, group: <><Ln>{BLIND}</Ln><Ln end="l">工）+1 种盲孔</Ln><Ln>图 2</Ln><Ln className="font-bold text-[#0a0acc]">针对微波版和 FR4 板</Ln></> },
  { h: 'h-9', kind: '盲孔外层', n: '1', a: '≥5um', b: '≥12um', key: true },
  { h: 'h-[39px]', kind: '通孔', n: '1', a: '≥12um', b: '≥12um' },
  { h: 'h-[35px]', kind: '通孔', n: '2', span: 3, a: '≥12um', b: '≥12um', gspan: 3, group: <><Ln>{BLIND}</Ln><Ln end="l">工）+1 种盲孔</Ln><Ln end="p">图 3</Ln></> },
  { h: 'h-9', kind: '盲孔内层', a: '≥5um', b: '/' },
  { h: 'h-[35px]', kind: '盲孔外层', a: '≥5um', b: '/' },
  { h: 'h-9', kind: '通孔', n: '2', span: 3, a: '≥12um', b: '≥12um', gspan: 3, group: <><Ln>{BLIND}</Ln><Ln end="l">工）+2 种盲孔</Ln><Ln end="p">图 4</Ln></> },
  { h: 'h-9', kind: '盲孔内层', a: '≥5um', b: '/', key: true },
  { h: 'h-[35px]', kind: '盲孔外层', a: '≥1um', b: '≥5um', key: true },
  { h: 'h-9', kind: '通孔', n: '2', span: 3, a: '≥12um', b: '≥12um', gspan: 3, group: <><Ln>{BLIND}</Ln><Ln end="l">工）+2 种盲孔</Ln><Ln end="p">图 5</Ln></> },
  { h: 'h-9', kind: '盲孔内层', a: '≥5um', b: '/' },
  { h: 'h-[35px]', kind: '盲孔外层', a: '≥5um', b: '/' },
];

const CELL = 'border border-black p-0';

const DocTable = () => (
  <table className="-mt-6 ml-[56px] w-[860px] table-fixed border-collapse text-center text-[15px] text-black">
    <colgroup>
      <col className="w-[159px]" /><col className="w-[201px]" /><col className="w-[128px]" /><col className="w-[107px]" /><col className="w-[130px]" /><col className="w-[117px]" /><col />
    </colgroup>
    <tbody>
      {rows.map((r, i) => (
        <tr key={i} className={r.h}>
          {i === 0 && <td rowSpan={3} className={`${CELL} pt-7 align-top`}><Ln className="font-bold text-[#0a0acc]">制要求</Ln></td>}
          {i === 3 && (
            <td rowSpan={16} className={`${CELL} font-bold text-[#0a0acc]`}>
              <Ln className="font-normal text-black">国军标板（GJB）</Ln>
              <Ln className="text-[#e01010]">线宽/间距≥6mil</Ln>
              <Ln className="text-[#e01010]">Wrap 和 Cap 按表要</Ln>
              <Ln><span className="text-[#e01010]">求控制，</span>不满足要求</Ln>
              <Ln>与客户沟通降低控</Ln>
              <Ln>制要求</Ln>
            </td>
          )}
          {r.group && <td rowSpan={r.gspan ?? 1} className={`${CELL} text-base`}>{r.group}</td>}
          <td className={`${CELL} whitespace-nowrap pb-[2px] text-base leading-6`}>{r.kind}<Mark /></td>
          {r.n && <td rowSpan={r.span ?? 1} className={`${CELL} pb-[2px] leading-6`}>{r.n}<Mark /></td>}
          <td className={`${CELL} pb-[2px] leading-6 ${r.key ? 'font-bold text-[#0a0acc]' : ''}`}>{r.a}<Mark /></td>
          <td className={`${CELL} pb-[2px] leading-6`}>{r.b}<Mark /></td>
          <td className="p-0 pl-[2px] pt-1 text-left align-top leading-3"><Mark /></td>
        </tr>
      ))}
    </tbody>
  </table>
);

const tabs = ['插入', '页面布局', '引用', '邮件', '审阅', '视图', 'Acrobat'];

const WordWindow = () => (
  <div className="absolute bottom-0 left-0 top-[227px] flex w-[1035px] max-w-full flex-col bg-white font-['Noto_Sans_CJK_SC',sans-serif] shadow-[0_0_14px_rgba(0,0,0,0.6)]">
    <header className="flex h-[34px] shrink-0 items-center">
      <div className="flex h-[25px] w-[174px] shrink-0 items-center gap-2 rounded-r-full border border-l-0 border-[#b5bac4] pl-1">
        <svg viewBox="0 0 14 14" className="h-[14px] w-[14px] shrink-0"><path d="M0 0h14v14H0z" fill="#4a4fb4" /><path d="M3 0h8v6H3z" fill="#fff" /><path d="M3 9h8v5H3z" fill="#c9cdea" /></svg>
        <svg viewBox="0 0 14 14" className="ml-[6px] h-[14px] w-[14px] shrink-0"><path d="M1 2v5h5M2 6q5-5 9-1t-3 8" fill="none" stroke="#a9b8d8" strokeWidth="2.500" /></svg>
        <Down className="text-[#b5bac4]" />
        <svg viewBox="0 0 14 14" className="h-[14px] w-[14px] shrink-0"><path d="M3 1v6M2 5a5 5 0 1 0 8-2M7 2h5v4" fill="none" stroke="#a9b8d8" strokeWidth="2.200" /></svg>
        <svg viewBox="0 0 18 16" className="ml-1 h-4 w-[18px] shrink-0"><path d="M1 15V4h5l1 2h7v3" fill="#e9b64c" stroke="#a8782a" /><path d="M1 15l4-7h12l-4 7z" fill="#fad37b" stroke="#a8782a" /><path d="M10 2h5v3" fill="none" stroke="#3563ad" /></svg>
        <svg viewBox="0 0 18 16" className="h-4 w-[18px] shrink-0"><path d="M5 3h8l4 3v9H5z" fill="#f2f5fa" stroke="#66707e" /><path d="M9 9h6v4H9z" fill="#a9c3e4" stroke="#66707e" /><path d="M1 5v8q2 3 3 0V4q2-3 3 0v8" fill="none" stroke="#66707e" /></svg>
        <span className="flex flex-col items-center text-[10px] font-bold leading-[9px] text-black">字A<svg viewBox="0 0 12 8" className="h-2 w-3"><path d="M1 3l4 4 6-6" fill="none" stroke="#3563d0" strokeWidth="2" /></svg></span>
      </div>
      <button aria-label="自定义快速访问工具栏" className="ml-2 flex w-[14px] flex-col items-center gap-[3px] text-[#1d3f8d]"><span className="h-[2px] w-2 bg-current" /><Down /></button>
      <h1 className="ml-9 w-[304px] whitespace-nowrap text-base leading-6 text-black">B5ZQ-71 [兼容模式] - Microsoft Word</h1>
      <div className="h-full w-[120px] border-x border-b-2 border-x-[#e9e3bb] border-b-[#f5dc5a] bg-gradient-to-b from-white to-[#fdf3a5] pl-[6px] pt-[5px] text-[15px] leading-6 text-black">表格工具</div>
      <span className="flex-1" />
      <div className="flex gap-[34px] pb-1 pr-[18px] text-black">
        <button aria-label="最小化"><svg viewBox="0 0 12 12" className="h-3 w-3"><path d="M1 6h10" stroke="currentColor" /></svg></button>
        <button aria-label="最大化"><svg viewBox="0 0 12 12" className="h-3 w-3"><path d="M1.500 1.500h9v9h-9z" fill="none" stroke="currentColor" /></svg></button>
        <button aria-label="关闭"><svg viewBox="0 0 12 12" className="h-3 w-3"><path d="M1 1l10 10M11 1L1 11" stroke="currentColor" /></svg></button>
      </div>
    </header>
    <nav className="flex h-[29px] shrink-0 items-stretch bg-[#bfdbff] text-[15px] leading-[30px] text-[#15428b]">
      <a href="#home" className="mt-[2px] rounded-t-[3px] border-r border-t border-[#8db2e3] bg-[#e4eefa] pl-[9px] pr-[14px] leading-7">开始</a>
      {tabs.map((t) => <a key={t} href={`#${t}`} className="px-[15px]">{t}</a>)}
      <span className="ml-[6px] flex border-x border-[#d5dfc8]"><a href="#design" className="px-[14px]">设计</a><a href="#layout" className="px-4">布局</a></span>
      <span className="flex-1" />
      <button aria-label="帮助" className="mr-[7px] mt-2 flex h-[14px] w-[14px] items-center justify-center rounded-full bg-[#2a5fc8] text-[11px] font-bold leading-none text-white shadow-[0_0_0_1px_#dce8fa,0_0_0_2px_#7d9bcf]">?</button>
    </nav>
    <div className="flex h-[122px] shrink-0 items-start gap-[3px] overflow-hidden border-b-2 border-t border-[#8db2e3] bg-gradient-to-b from-[#dbe7f5] via-[#cfe0f4] to-[#e2f3fd] pt-[3px]">
      <ClipPanel /><FontPanel /><ParagraphPanel /><StylesPanel /><EditPanel />
    </div>
    <div className="h-[6px] shrink-0 bg-[#a6c4ec]" />
    <div className="flex min-h-0 flex-1">
      <div className="min-w-0 flex-1 overflow-hidden bg-white"><DocTable /></div>
      <div className="w-[22px] shrink-0 bg-gradient-to-r from-[#46618c] via-[#83a8da] to-[#7a9fd2]" />
      <div className="flex w-[17px] shrink-0 flex-col items-center border-r-2 border-[#c5d9f2] bg-gradient-to-r from-[#85a9d9] to-[#6c90c5]">
        <svg viewBox="0 0 14 14" className="my-[3px] h-[14px] w-[14px] shrink-0"><path d="M1 3h4l2 3 3-3h3v8h-4l-2 2-2-3H1z" fill="#fff" stroke="#4c6188" /></svg>
        <svg viewBox="0 0 8 4" className="mt-[6px] h-1 w-2 shrink-0"><path d="M0 4h8L4 0z" fill="#2c4a7c" /></svg>
        <span className="flex-[340] shrink" />
        <span className="flex h-[51px] w-[14px] shrink-0 flex-col items-center justify-center gap-[2px] rounded-sm border border-[#5878a8] bg-gradient-to-r from-[#e3eefb] to-[#b3cbec]">
          {[0, 1, 2, 3].map((i) => <i key={i} className="h-px w-2 bg-[#5878a8]" />)}
        </span>
        <span className="flex-[207] shrink" />
      </div>
    </div>
  </div>
);

export default function App() {
  return (
    <div lang="zh-CN" className="relative h-screen overflow-hidden bg-[#c0cfe2] font-['Liberation_Serif','Noto_Sans_CJK_SC',sans-serif] leading-4">
      <MiApp />
      <CamWindow />
      <WordWindow />
    </div>
  );
}
